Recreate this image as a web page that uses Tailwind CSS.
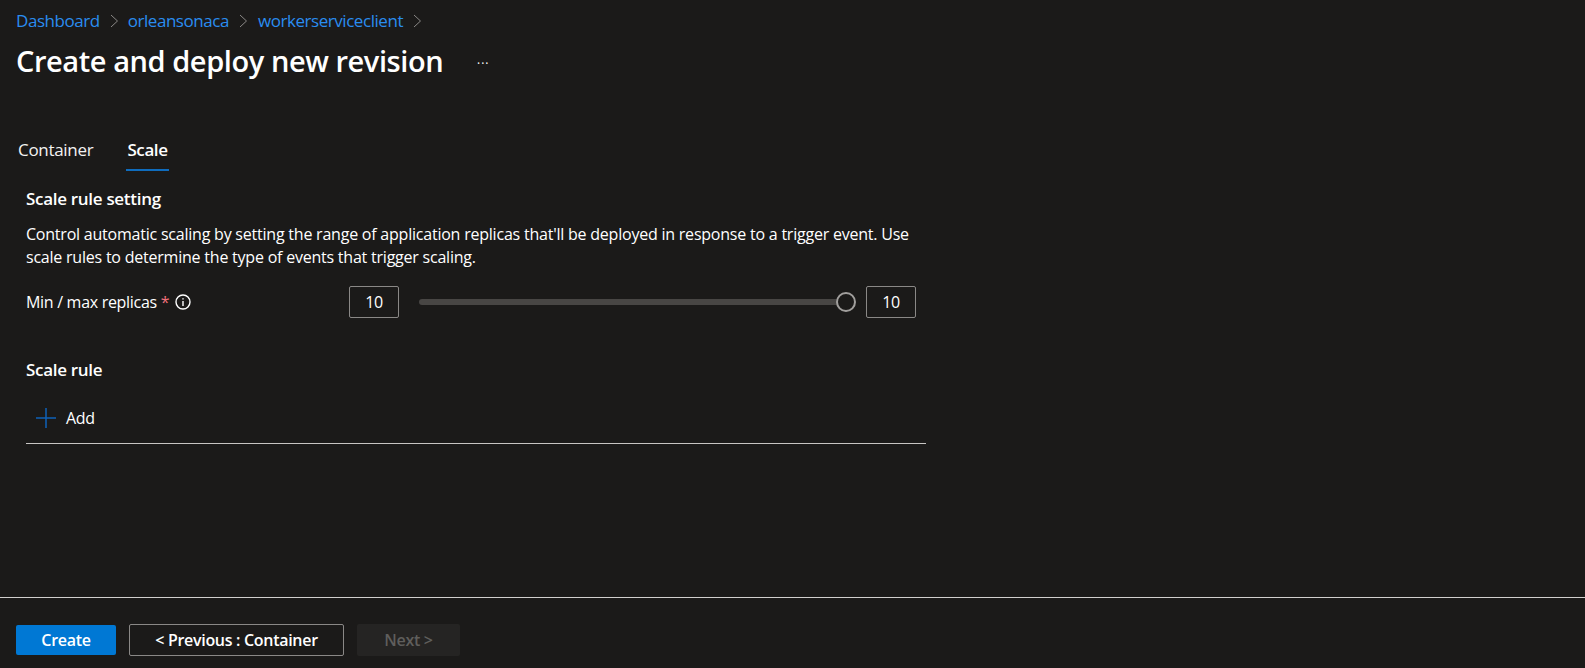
<!DOCTYPE html>
<html lang="en">
<head>
    <meta charset="UTF-8">
    <title>Create and deploy new revision</title>
    <script src="https://cdn.jsdelivr.net/npm/@tailwindcss/browser@4"></script>
</head>
<body class="bg-[#1b1a19] text-white font-['Open_Sans',sans-serif] h-[668px] w-[1585px] overflow-hidden flex flex-col">
    <!-- Header -->
    <div class="h-[597px] shrink-0">
        <nav class="flex items-center pl-4 pt-[9px] h-[33px] text-[17px] tracking-[-0.45px] text-[#2a8df0]">
            <a>Dashboard</a>
            <svg class="w-[9px] h-[14px] ml-[10px] mr-[9px]" viewBox="0 0 9 14" fill="none" stroke="#8a8886" stroke-width="1"><path d="M1 1l6.5 6-6.5 6"/></svg>
            <a>orleansonaca</a>
            <svg class="w-[9px] h-[14px] ml-[10px] mr-[10px]" viewBox="0 0 9 14" fill="none" stroke="#8a8886" stroke-width="1"><path d="M1 1l6.5 6-6.5 6"/></svg>
            <a>workerserviceclient</a>
            <svg class="w-[9px] h-[14px] mx-[10px]" viewBox="0 0 9 14" fill="none" stroke="#8a8886" stroke-width="1"><path d="M1 1l6.5 6-6.5 6"/></svg>
        </nav>
        <div class="flex items-center pl-4 h-[42px] mt-[7px]">
            <h1 class="text-[29px] font-semibold tracking-[-0.43px] w-[461px] whitespace-nowrap">Create and deploy new revision</h1>
            <span class="text-[12px] tracking-[1px] mt-[6px]">···</span>
        </div>
        <!-- Tabs -->
        <div class="flex mt-[42px] ml-[18px] h-[48px] text-[17px] tracking-[-0.3px]">
            <div class="w-[108px] pt-[13px] text-[#f3f2f1]">Container</div>
            <div class="w-[43px] border-b-2 border-[#0f6cbd] pt-[13px] font-semibold text-center h-[47px] whitespace-nowrap tracking-[-0.4px]">Scale</div>
        </div>
        <!-- Form -->
        <div class="ml-[26px] w-[900px] text-[16px] tracking-[-0.3px]">
            <h2 class="mt-[14px] h-[26px] leading-[26px] text-[17px] font-semibold">Scale rule setting</h2>
            <p class="mt-[11px] leading-[23px] w-[899px] tracking-[-0.22px]">Control automatic scaling by setting the range of application replicas that'll be deployed in response to a trigger event. Use scale rules to determine the type of events that trigger scaling.</p>
            <div class="flex items-center mt-[17px] h-[32px]">
                <label class="flex items-center w-[323px]">Min / max replicas <span class="text-[#f1707b] ml-1">*</span>
                    <svg class="w-4 h-4 ml-[6px]" viewBox="0 0 16 16" fill="none" stroke="white" stroke-width="1.4"><circle cx="8" cy="8" r="7"/><path d="M8 7v5M8 4.2v1.3"/></svg>
                </label>
                <div class="w-[50px] h-[32px] border border-[#8a8886] rounded-[2px] flex items-center justify-center">10</div>
                <div class="flex-1 ml-[20px] mr-[21px] h-[6px] bg-[#484644] rounded-full"></div>
                <div class="w-[50px] h-[32px] border border-[#8a8886] rounded-[2px] flex items-center justify-center mr-[10px]">10</div>
            </div>
            <h2 class="mt-[39px] h-[26px] leading-[26px] text-[17px] font-semibold">Scale rule</h2>
            <div class="flex items-center mt-[24px] pl-[10px] h-[22px]">
                <svg class="w-5 h-5" viewBox="0 0 20 20" fill="none" stroke="#0f62b8" stroke-width="1.5"><path d="M10 0v20M0 10h20"/></svg>
                <span class="ml-[10px]">Add</span>
            </div>
            <div class="mt-[14px] border-t border-[#c8c6c4] h-0"></div>
        </div>
    </div>
    <!-- Footer -->
    <div class="border-t border-[#d2d0ce] flex items-start gap-[13px] pl-4 pt-[27px] text-[16px] font-semibold tracking-[-0.3px]">
        <button class="w-[100px] h-[30px] bg-[#0078d4] rounded-[2px] text-white">Create</button>
        <button class="w-[215px] h-[32px] -mt-px border border-[#8a8886] rounded-[2px]">&lt; Previous : Container</button>
        <button class="w-[103px] h-[32px] -mt-px bg-[#252423] rounded-[2px] text-[#5f5e5c]">Next &gt;</button>
    </div>
    <!-- Slider thumb -->
    <div class="absolute left-[836px] top-[292px] w-5 h-5 rounded-full border-2 border-[#a19f9d] bg-[#1b1a19]"></div>
</body>
</html>
